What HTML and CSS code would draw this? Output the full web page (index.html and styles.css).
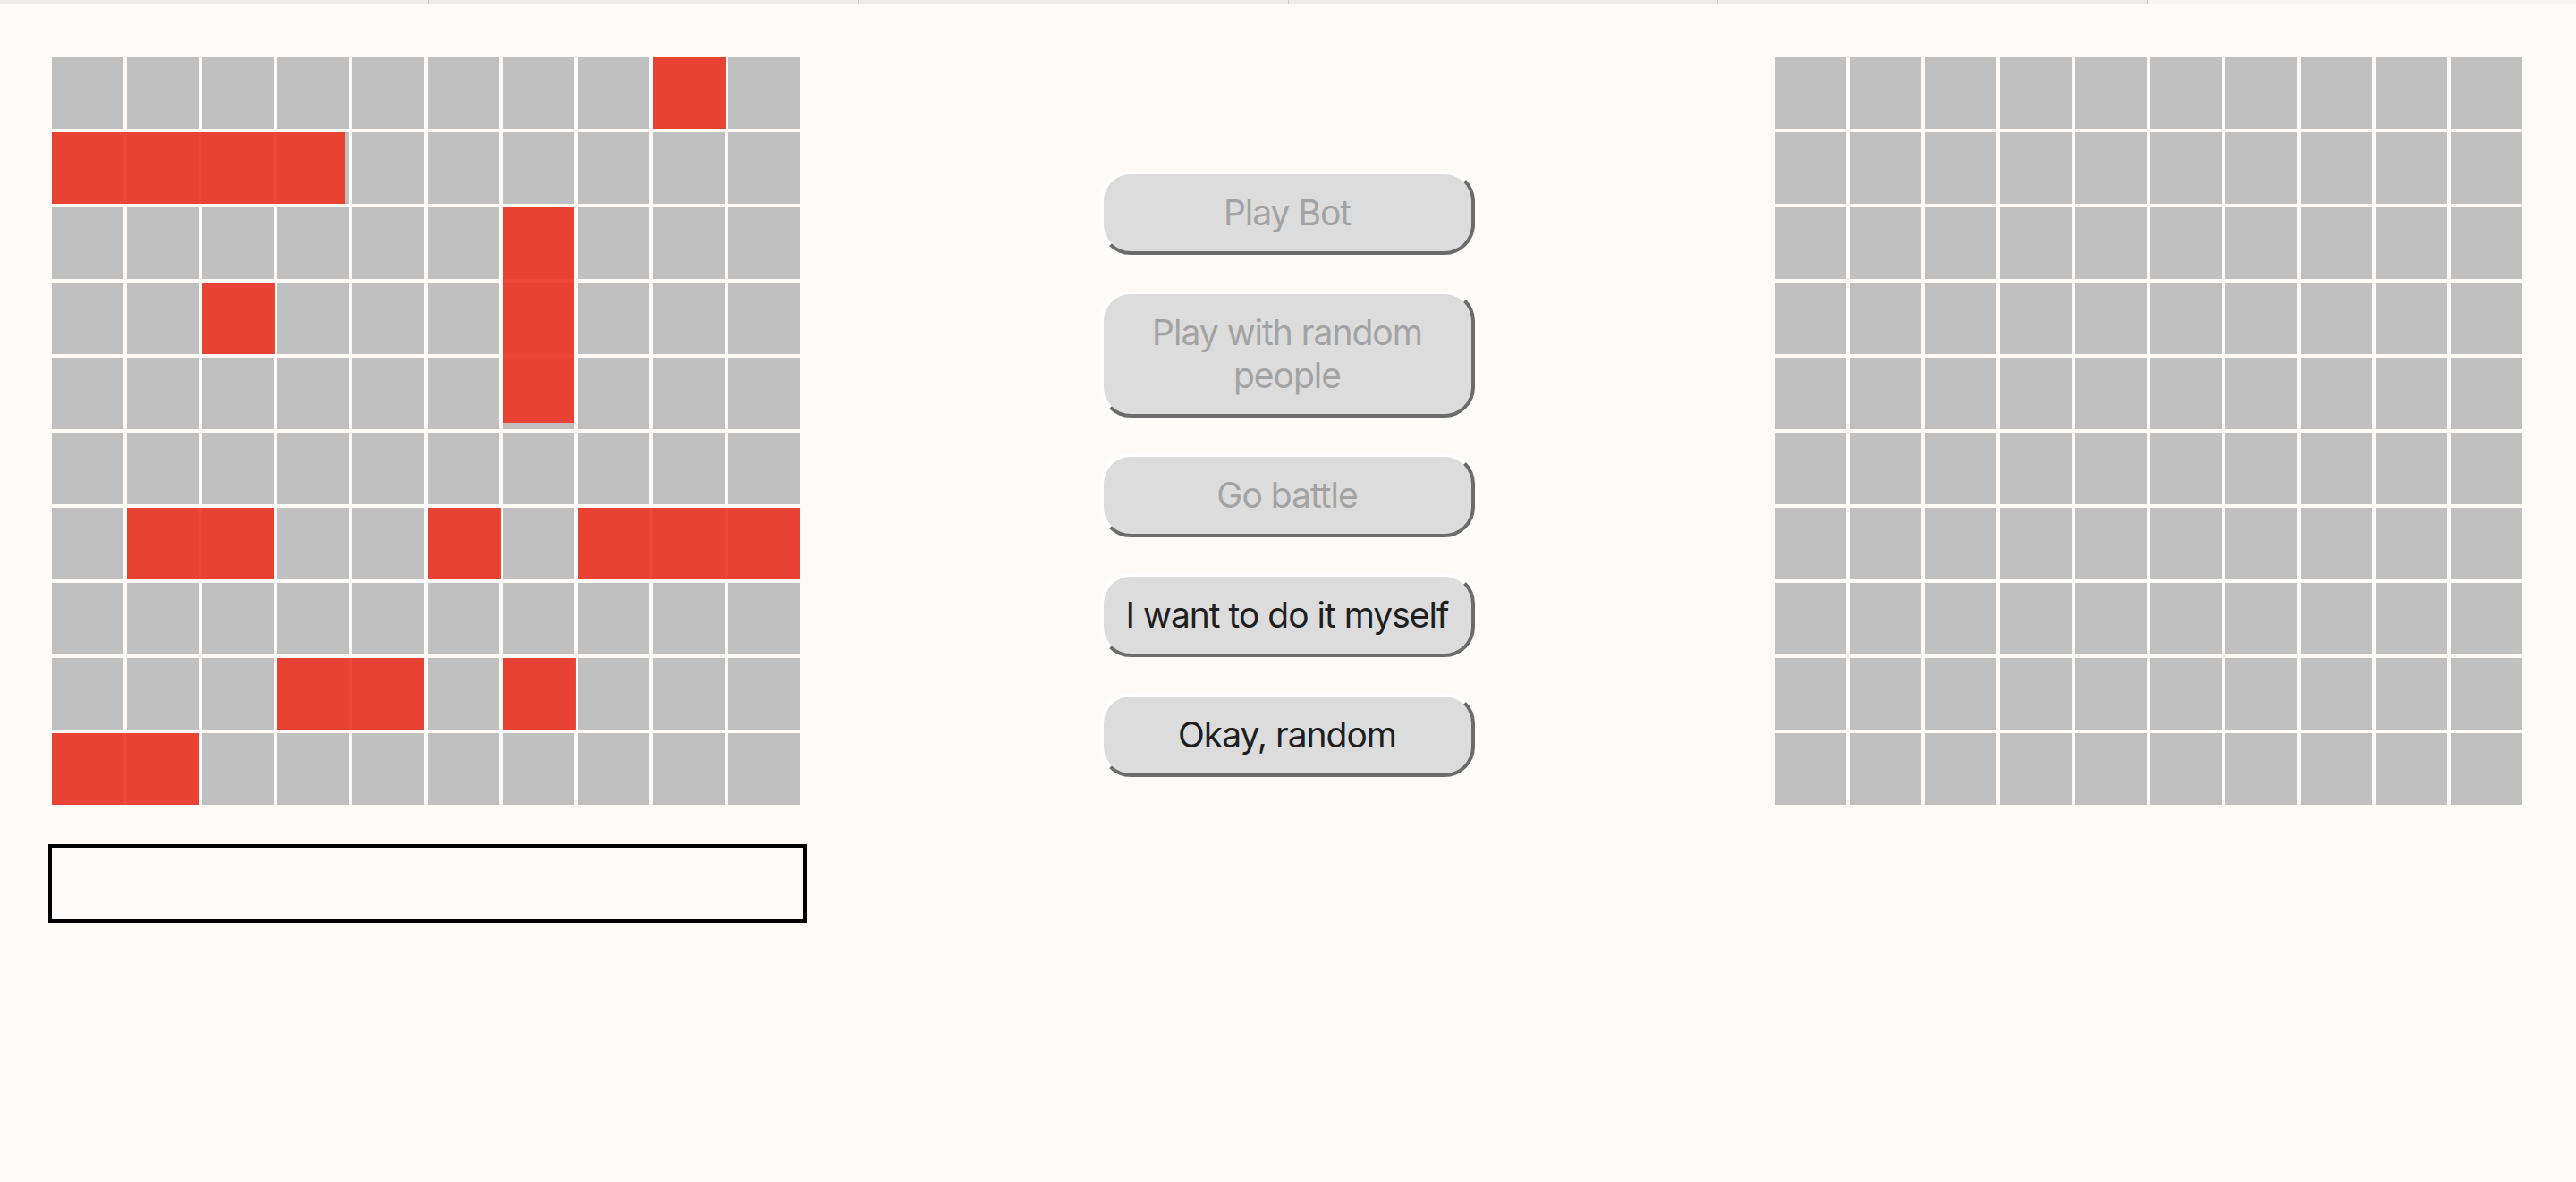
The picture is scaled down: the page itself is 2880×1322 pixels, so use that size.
FILE: index.html
```html
<!DOCTYPE html>
<html lang="en">
<head>
<meta charset="utf-8">
<title>Battleship</title>
<link rel="stylesheet" href="styles.css">
</head>
<body>
<div class="tabs">
  <div class="tab"></div>
  <div class="tab"></div>
  <div class="tab"></div>
  <div class="tab"></div>
  <div class="tab"></div>
  <div class="tab tab-active"></div>
</div>
<main class="main">
  <section class="left">
    <div class="board" id="own">
      <div class="ship h" style="left:672px;top:0px;width:82px;height:80px"></div>
      <div class="ship h" style="left:0px;top:84px;width:328px;height:80px"></div>
      <div class="ship v" style="left:504px;top:168px;width:80px;height:241px"></div>
      <div class="ship h" style="left:168px;top:252px;width:82px;height:80px"></div>
      <div class="ship h" style="left:84px;top:504px;width:164px;height:80px"></div>
      <div class="ship h" style="left:420px;top:504px;width:82px;height:80px"></div>
      <div class="ship h" style="left:588px;top:504px;width:248px;height:80px"></div>
      <div class="ship h" style="left:252px;top:672px;width:164px;height:80px"></div>
      <div class="ship h" style="left:504px;top:672px;width:82px;height:80px"></div>
      <div class="ship h" style="left:0px;top:756px;width:164px;height:80px"></div>
    </div>
    <input class="status" type="text">
  </section>
  <section class="middle">
    <button class="btn" disabled>Play Bot</button>
    <button class="btn" disabled>Play with random people</button>
    <button class="btn" disabled>Go battle</button>
    <button class="btn">I want to do it myself</button>
    <button class="btn">Okay, random</button>
  </section>
  <section class="right">
    <div class="board" id="enemy"></div>
  </section>
</main>
<script>
  document.querySelectorAll('.board').forEach(function (b) {
    var frag = document.createDocumentFragment();
    for (var i = 0; i < 100; i++) {
      var c = document.createElement('div');
      c.className = 'cell';
      frag.appendChild(c);
    }
    b.insertBefore(frag, b.firstChild);
  });
</script>
</body>
</html>
```

FILE: styles.css
```css
html, body {
  margin: 0;
  padding: 0;
}

body {
  background: #fefaf8;
  font-family: Inter, "Noto Sans", "Liberation Sans", sans-serif;
  width: 2880px;
  height: 1322px;
  overflow: hidden;
}

.tabs {
  display: flex;
  height: 4px;
  border-bottom: 1px solid #d8d6d1;
  background: #ecebe6;
}

.tab {
  flex: 1;
  border-right: 1px solid #cfcdc8;
}

.tab-active {
  background: #f8f6f1;
  border-right: none;
}

.main {
  display: grid;
  grid-template-columns: 836px 1fr 836px;
  padding: 59px 60px 0 58px;
}

.left {
  display: flex;
  flex-direction: column;
}

.board {
  position: relative;
  display: grid;
  grid-template-columns: repeat(10, 80px);
  grid-auto-rows: 80px;
  gap: 4px;
  width: 836px;
}

.cell {
  background: #c0c0c0;
}

.ship {
  position: absolute;
  background: rgba(234, 55, 39, 0.92);
}

.status {
  box-sizing: border-box;
  width: 848px;
  height: 88px;
  margin: 44px 0 0 -4px;
  border: 4px solid #000;
  background: #fefaf8;
  padding: 0;
  font-size: 32px;
  outline: none;
}

.middle {
  display: flex;
  flex-direction: column;
  align-items: center;
  gap: 40px;
  padding-top: 127px;
}

.btn {
  box-sizing: border-box;
  width: 419px;
  padding: 19px 8px;
  border: 4px solid;
  border-color: #ffffff #6b6b6b #6b6b6b #ffffff;
  border-radius: 34px;
  background: #dcdcdc;
  color: #1f1f1f;
  font-family: Inter, "Noto Sans", "Liberation Sans", sans-serif;
  font-size: 39px;
  letter-spacing: -1px;
  line-height: 48px;
  text-align: center;
}

.btn:disabled {
  color: #a3a3a3;
}
```
